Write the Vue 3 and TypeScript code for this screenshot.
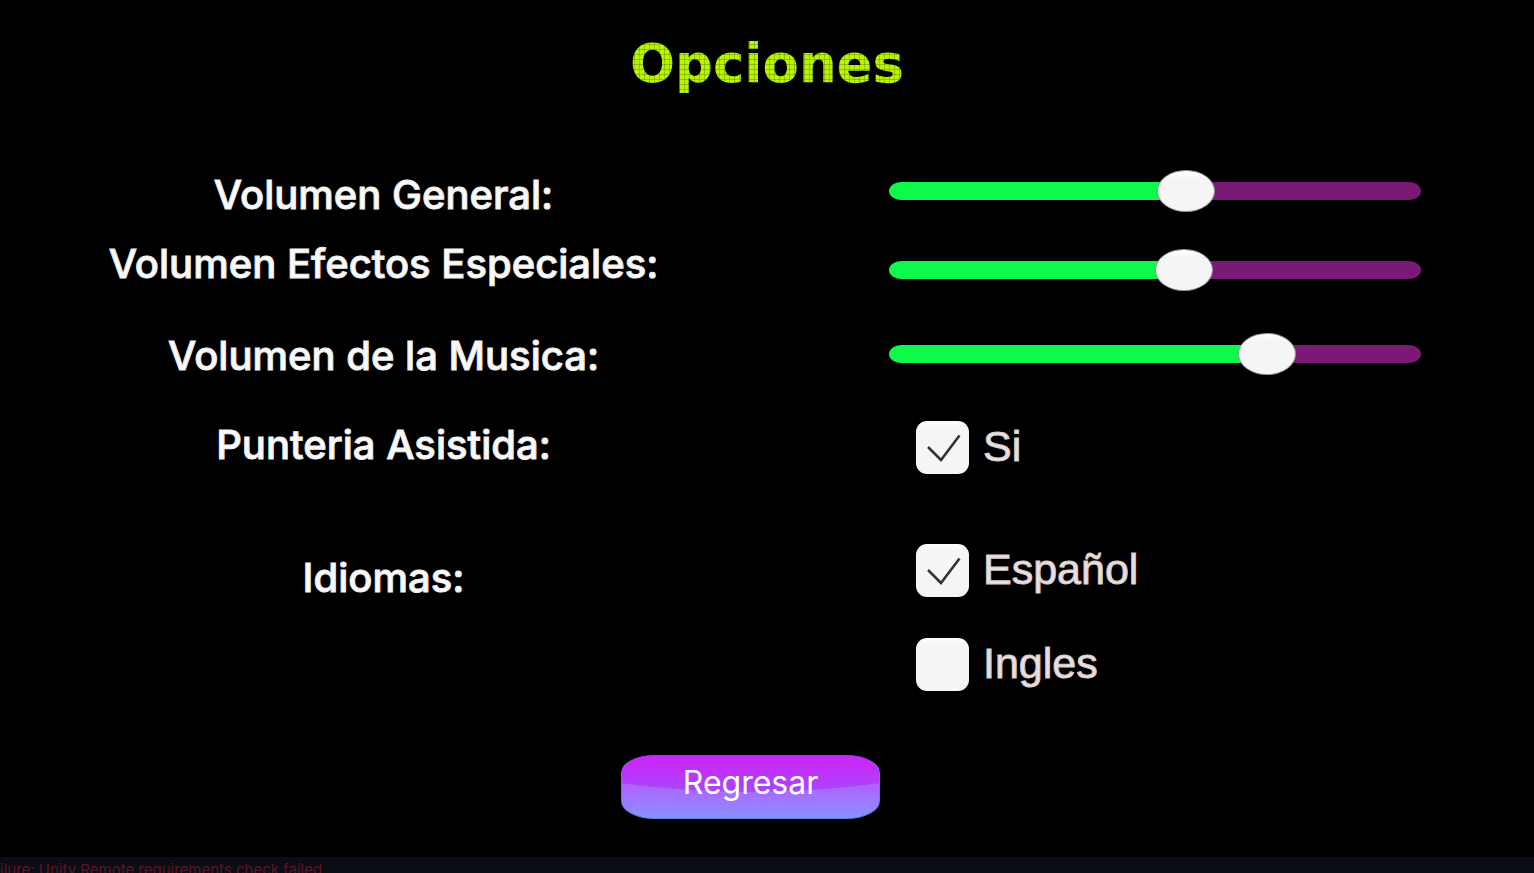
<script setup lang="ts">
import { reactive, ref } from 'vue'

interface VolumeSetting {
  id: string
  label: string
  value: number
}

const volumes = reactive<VolumeSetting[]>([
  { id: 'general', label: 'Volumen General:', value: 565 },
  { id: 'efectos', label: 'Volumen Efectos Especiales:', value: 561 },
  { id: 'musica', label: 'Volumen de la Musica:', value: 736 },
])

const toggles = reactive([
  { id: 'asistida', text: 'Si', on: true },
  { id: 'espanol', text: 'Español', on: true },
  { id: 'ingles', text: 'Ingles', on: false },
])

const status = ref('ilure: Unity Remote requirements check failed')
</script>

<template>
  <div class="screen">
    <h1 class="title"><span>Opciones</span></h1>

    <main class="options">
      <div class="names">
        <label v-for="v in volumes" :key="v.id" :for="v.id" :class="['name', v.id]">{{ v.label }}</label>
        <label for="asistida" class="name punteria">Punteria Asistida:</label>
        <span id="idiomas" class="name idiomas">Idiomas:</span>
      </div>

      <div class="controls">
        <input
          v-for="v in volumes"
          :id="v.id"
          :key="v.id"
          v-model.number="v.value"
          :class="['slider', v.id]"
          :style="{ '--level': v.value / 1000 }"
          type="range"
          min="0"
          max="1000"
        />
        <div v-for="t in toggles" :key="t.id" :class="['toggle', t.id]">
          <span class="box">
            <input :id="t.id" v-model="t.on" type="checkbox" />
            <svg v-if="t.on" viewBox="0 0 53 53" aria-hidden="true">
              <path d="M12 26 L25 39 L43.5 14.5" />
            </svg>
          </span>
          <label :for="t.id">{{ t.text }}</label>
        </div>
      </div>
    </main>

    <div class="actions">
      <button type="button" class="back">
        <svg viewBox="0 0 258 64" preserveAspectRatio="none" aria-hidden="true">
          <defs>
            <linearGradient id="gloss" x1="0" y1="0" x2="0" y2="1">
              <stop offset="0" stop-color="#c728f8" />
              <stop offset="0.3" stop-color="#c42df8" />
              <stop offset="1" stop-color="#a648fb" />
            </linearGradient>
          </defs>
          <path d="M0 0 H258 V28 Q129 46 0 28 Z" fill="url(#gloss)" />
        </svg>
        <span>Regresar</span>
      </button>
    </div>

    <footer class="status">{{ status }}</footer>
  </div>
</template>

<style>
body {
  margin: 0;
  background: #000;
}
</style>

<style scoped>
.screen {
  display: flex;
  flex-direction: column;
  min-height: 100vh;
  background: #000;
  color: #fafafa;
  font-family: Inter, "Noto Sans", sans-serif;
}

.title {
  margin: 0;
  padding-top: 32px;
  text-align: center;
  font-family: "DejaVu Sans", sans-serif;
  font-size: 53px;
  line-height: 64px;
  font-weight: 700;
}

.title span {
  color: transparent;
  background:
    repeating-linear-gradient(90deg, transparent 0 4px, rgba(60, 90, 0, 0.3) 4px 5px),
    repeating-linear-gradient(0deg, #b8f500 0 4px, #90c400 4px 5px);
  background-clip: text;
  -webkit-background-clip: text;
}

.options {
  display: grid;
  grid-template-columns: 1fr 1fr;
  padding-top: 74px;
}

.names {
  display: flex;
  flex-direction: column;
  align-items: center;
  padding-top: 1px;
}

.name {
  font-size: 40px;
  line-height: 48px;
  font-weight: 500;
  white-space: nowrap;
  -webkit-text-stroke: 1px #ededed;
}

.name.efectos { margin-top: 21px; }
.name.musica { margin-top: 44px; }
.name.punteria { margin-top: 41px; }
.name.idiomas { margin-top: 85px; }

.controls {
  display: flex;
  flex-direction: column;
  padding: 0 113px 0 122px;
}

.slider {
  appearance: none;
  -webkit-appearance: none;
  width: 100%;
  height: 42px;
  margin: 0;
  background: transparent;
}

.slider.efectos { margin-top: 37px; }
.slider.musica { margin-top: 42px; }

.slider::-webkit-slider-runnable-track {
  height: 18px;
  border-radius: 12px / 9px;
  background: linear-gradient(
    90deg,
    #0dfa4b calc(29px + (100% - 58px) * var(--level)),
    #7b1a76 calc(29px + (100% - 58px) * var(--level))
  );
}

.slider::-webkit-slider-thumb {
  appearance: none;
  -webkit-appearance: none;
  width: 58px;
  height: 42px;
  margin-top: -12px;
  border: 1px solid #9a9a9a;
  border-radius: 50%;
  background: linear-gradient(#fff, #f5f5f5 20%);
}

.toggle {
  display: flex;
  align-items: center;
  gap: 14px;
  padding-left: 27px;
  color: #e9e1e1;
}

.toggle.asistida { margin-top: 46px; }
.toggle.espanol { margin-top: 70px; }
.toggle.ingles { margin-top: 41px; }

.toggle label {
  font-family: "Liberation Sans", Arial, sans-serif;
  font-size: 43px;
  line-height: 48px;
  padding-bottom: 3px;
  -webkit-text-stroke: 1px #d4caca;
}

.box {
  display: grid;
  width: 53px;
  height: 53px;
}

.box > * {
  grid-area: 1 / 1;
}

.box input {
  appearance: none;
  -webkit-appearance: none;
  width: 53px;
  height: 53px;
  margin: 0;
  border-radius: 11px;
  background: linear-gradient(#fff, #f5f5f5 15%);
}

.box svg {
  pointer-events: none;
  z-index: 1;
  fill: none;
  stroke: #333;
  stroke-width: 2.6;
}

.actions {
  display: flex;
  justify-content: center;
  padding: 64px 33px 0 0;
}

.back {
  position: relative;
  width: 259px;
  height: 64px;
  padding: 0 0 8px;
  overflow: hidden;
  border: 1px solid #7a6cf5;
  border-top-color: #b52be8;
  border-bottom-color: #4f8cf0;
  border-radius: 34px / 18px;
  background: linear-gradient(#b65cff 40%, #8c8cff 95%);
  color: #fff;
  font-family: inherit;
  font-size: 32px;
  line-height: 40px;
}

.back svg {
  position: absolute;
  inset: 0;
  width: 100%;
  height: 100%;
}

.back span {
  position: relative;
}

.status {
  height: 16px;
  margin-top: auto;
  overflow: hidden;
  background: #0b0d14;
  color: #5c1528;
  font-size: 15px;
  line-height: 26px;
  white-space: nowrap;
}
</style>
